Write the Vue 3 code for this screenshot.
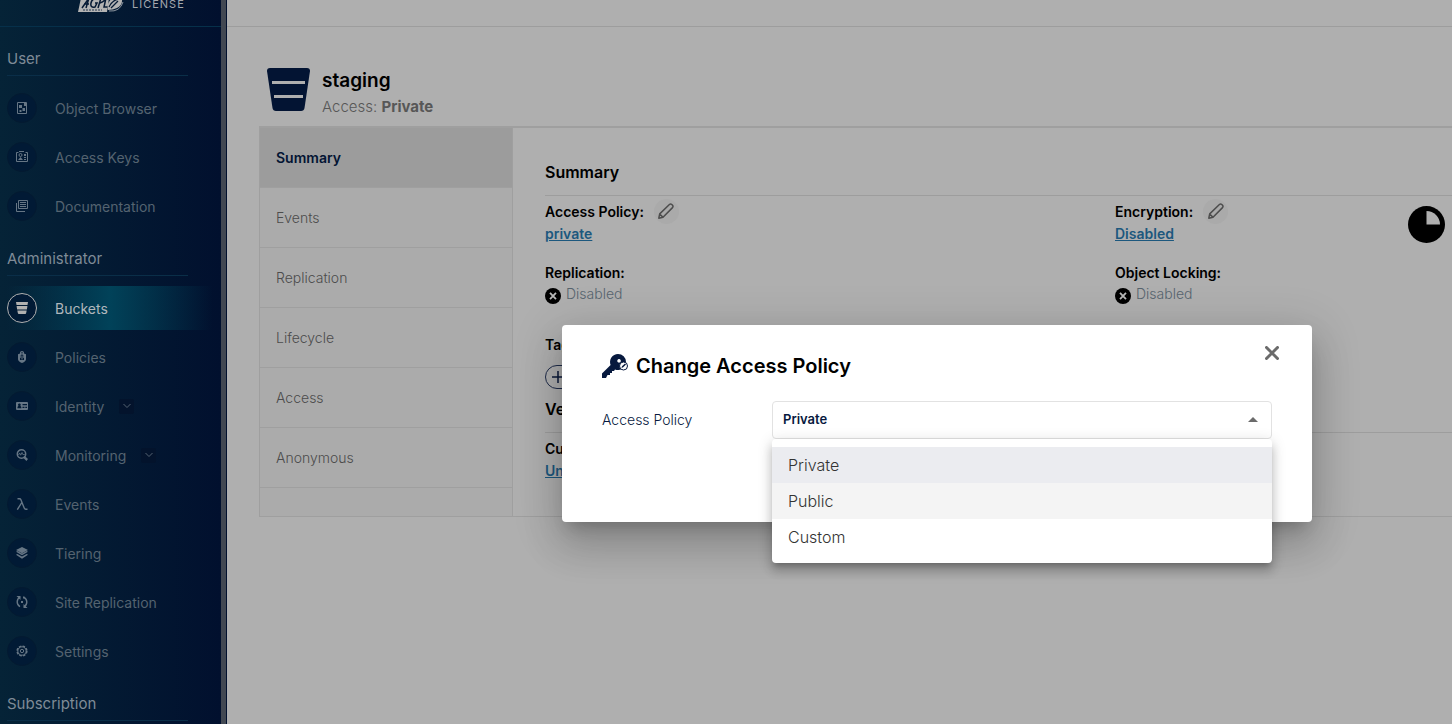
<script setup>
import { ref } from 'vue'

const groups = [
  {
    title: 'User',
    items: [
      { label: 'Object Browser', icon: 'browser' },
      { label: 'Access Keys', icon: 'keys' },
      { label: 'Documentation', icon: 'docs' }
    ]
  },
  {
    title: 'Administrator',
    items: [
      { label: 'Buckets', icon: 'bucket', active: true },
      { label: 'Policies', icon: 'policy' },
      { label: 'Identity', icon: 'identity', expandable: true },
      { label: 'Monitoring', icon: 'monitor', expandable: true },
      { label: 'Events', icon: 'lambda' },
      { label: 'Tiering', icon: 'layers' },
      { label: 'Site Replication', icon: 'sync' },
      { label: 'Settings', icon: 'gear' }
    ]
  },
  { title: 'Subscription', items: [] }
]

const icons = {
  browser: '<path fill="none" stroke="currentColor" d="M1.5 .5h9v11h-9z"/><path d="M3 3h3v3H3zM6.500 6h2.500v3H6.500zM3.500 8h2v2h-2zM8 1h2v3H8z"/>',
  keys: '<path fill="none" stroke="currentColor" d="M2.500 1.500h-2v9h11v-9h-2M3 .5h5"/><circle cx="4.500" cy="4" r="1.500" fill="none" stroke="currentColor"/><path d="M2 9l2.500-3L7 9zM8 3h2v2H8zM8 6h2v1H8zM8 8h2v1H8z"/>',
  docs: '<path fill="none" stroke="currentColor" d="M2.500 .5h9v8h-9zM.5 3v8.500H9M4 2.500h6M4 4.500h6M4 6.500h6"/>',
  bucket: '<path d="M0 0h12l-.5 3H.5zM.6 4h10.800l-.5 3.500H1.100zM1.300 8.500h9.400l-.6 2.700q-.1.800-.9.800H2.800q-.8 0-.9-.8z"/>',
  policy: '<path fill-rule="evenodd" d="M4 2.500V1.500Q4 0 6 0t2 1.500v1l2 .8v5Q10 10.500 6 12 2 10.500 2 8.300v-5zM5 2.200h2v-.7H5zM6 3.500a1.500 1.500 0 0 0-.8 2.700L4 7v2h4V7l-1.200-.8A1.500 1.500 0 0 0 6 3.500z"/><path d="M5.500 4.500h1v4h-1z"/>',
  identity: '<path fill-rule="evenodd" d="M1 2h10q1 0 1 1v6q0 1-1 1H1q-1 0-1-1V3q0-1 1-1zM3.300 3.500a1.300 1.300 0 0 0-.8 2.300L1.500 7v1.300h3.800V7l-1-1.200a1.300 1.300 0 0 0-1-2.300zM6.500 4v1.300H11V4zM6.500 6.700V8h2V6.700zM9.300 6.700V8H11V6.700z"/>',
  monitor: '<circle cx="5.500" cy="5" r="4.200" fill="none" stroke="currentColor" stroke-width="1.500"/><path d="M7 8.500l1.500-1.800L12 10l-1.600 2z"/><path fill="none" stroke="currentColor" stroke-width=".8" d="M2.500 6l1.200-2 1 2.200L6 3.500l.8 2h2"/>',
  lambda: '<path fill="none" stroke="currentColor" stroke-width="1.400" d="M1.500 .8h2q1 0 1.400 1L8.200 10q.5 1.200 1.600 1.200h1.700M5.800 4.500L1.300 11.700"/>',
  layers: '<path d="M6 0l6 3-6 3.300L0 3z"/><path d="M0 4.700l1.500-.8L6 6.600l4.500-2.700 1.500.8L6 8.300zM0 7.700l1.300-.8L6 9.500l4.700-2.600 1.300.8L6 11.700z"/>',
  sync: '<path fill="none" stroke="currentColor" stroke-width="1.400" d="M4 1.200Q1.200 2.800 1.200 6q0 3 2.800 4.700M8 10.800Q10.800 9.200 10.800 6q0-3-2.800-4.700"/><path d="M.5 0h4v4zM11.500 12h-4V8zM5 5h2v2H5zM7 .5h1.500v2H7z"/>',
  gear: '<circle cx="6" cy="6" r="4.800" fill="none" stroke="currentColor" stroke-width="1.600" stroke-dasharray="2.500 1.270"/><circle cx="6" cy="6" r="4.200" fill="none" stroke="currentColor"/><circle cx="6" cy="6" r="1.700" fill="none" stroke="currentColor"/>'
}

const tabs = ['Summary', 'Events', 'Replication', 'Lifecycle', 'Access', 'Anonymous']
const options = ['Private', 'Public', 'Custom']
const policy = ref('Private')
const hovered = ref('Public')
</script>

<template>
  <div class="app">
    <aside class="side">
      <header class="brand">
        <svg class="agpl" viewBox="0 0 46 14" width="46" height="14" aria-hidden="true">
          <path d="M3 0h28l-2 14H0z" fill="#b3b3b3" />
          <path d="M4 10L11 0M8 10l3-10M6 6h5M19 1q-5-1-6 4t4 4l2-4h-2M20 10l3-10h3q2 3-4 5M28 0l-2 9h4" fill="none" stroke="#071b35" stroke-width="1.500" />
          <path d="M5 12h19" stroke="#26394e" stroke-dasharray="2 1" />
          <path d="M30 12Q28 4 35 0h9q1 7-5 10-4 2-9 2z" fill="#b3b3b3" />
          <path d="M31 9Q35 1 42 1M33 10l7-7" fill="none" stroke="#071b35" stroke-width="1.300" />
          <path d="M31 13q11 1 14-9" fill="none" stroke="#8c959f" />
        </svg>
        <span class="license">LICENSE</span>
      </header>
      <nav class="nav" aria-label="Main">
        <section v-for="g in groups" :key="g.title">
          <h2 class="group">{{ g.title }}</h2>
          <ul v-if="g.items.length" class="items">
            <li v-for="i in g.items" :key="i.label">
              <a href="#" class="item" :class="{ active: i.active }">
                <span class="disc"><svg viewBox="0 0 12 12" width="12" height="12" fill="currentColor" aria-hidden="true" v-html="icons[i.icon]"></svg></span>
                <span>{{ i.label }}</span>
                <span v-if="i.expandable" class="chev">
                  <svg viewBox="0 0 8 6" width="8" height="6" aria-hidden="true"><path d="M.5 1L4 4.500 7.500 1" fill="none" stroke="currentColor" /></svg>
                </span>
              </a>
            </li>
          </ul>
        </section>
      </nav>
    </aside>
    <div class="bar"></div>

    <main class="main">
      <div class="topbar"></div>
      <div class="content">
        <header class="head">
          <svg viewBox="0 0 43 43" width="43" height="43" aria-hidden="true">
            <path d="M3 0h37q3 0 3 3l-5.500 37q-.5 3-3.500 3H9q-3 0-3.500-3L0 3q0-3 3-3z" fill="#031433" />
            <path d="M5 13h33v3H5zM7 27h29v3H7z" fill="#afafaf" />
          </svg>
          <div>
            <h1 class="name">staging</h1>
            <p class="access">Access: <b>Private</b></p>
          </div>
        </header>

        <div class="panel">
          <div class="tabs" role="tablist" aria-orientation="vertical">
            <button v-for="(t, n) in tabs" :key="t" class="tab" :class="{ on: n === 0 }" role="tab" :aria-selected="n === 0">{{ t }}</button>
          </div>
          <div class="body" role="tabpanel">
            <h2 class="sect">Summary</h2>
            <div class="grid">
              <div>
                <div class="label">Access Policy:
                  <button class="edit" aria-label="Edit access policy"><svg viewBox="0 0 16 16" width="16" height="16" aria-hidden="true"><path d="M.8 15.200l.9-4.300L11.400 1.500q1.200-1 2.400 0l.7.700q1 1.200 0 2.400L5 14.200zM1.900 11.200l2.900 2.900" fill="none" stroke="#4d4d4d" stroke-width="1.500" stroke-linejoin="round" /></svg></button>
                </div>
                <a href="#" class="link">private</a>
              </div>
              <div>
                <div class="label">Encryption:
                  <button class="edit" aria-label="Edit encryption"><svg viewBox="0 0 16 16" width="16" height="16" aria-hidden="true"><path d="M.8 15.200l.9-4.300L11.400 1.500q1.200-1 2.400 0l.7.700q1 1.200 0 2.400L5 14.200zM1.900 11.200l2.900 2.900" fill="none" stroke="#4d4d4d" stroke-width="1.500" stroke-linejoin="round" /></svg></button>
                </div>
                <a href="#" class="link">Disabled</a>
              </div>
              <svg class="pie" viewBox="0 0 37 37" width="37" height="37" aria-hidden="true">
                <circle cx="18.500" cy="18.500" r="18.500" />
                <path d="M18.500 5v13.500H32A13.500 13.500 0 0 0 18.500 5z" fill="#afafaf" />
              </svg>
              <div v-for="l in ['Replication:', 'Object Locking:']" :key="l">
                <div class="label">{{ l }}</div>
                <div class="off">
                  <svg viewBox="0 0 16 16" width="16" height="16" aria-hidden="true"><circle cx="8" cy="8" r="8" /><path d="M5 4.800l6 6.400M11 4.800l-6 6.400" stroke="#b8b8b8" stroke-width="1.800" /></svg>
                  <span>Disabled</span>
                </div>
              </div>
            </div>
            <div class="tags">
              <div class="label">Tags:</div>
              <button class="add" aria-label="Add tag"><svg viewBox="0 0 12 12" width="12" height="12" aria-hidden="true"><path d="M6 0v12M0 6h12" stroke="#0b1a3a" stroke-width="1.500" /></svg></button>
            </div>
            <h2 class="sect second">Versioning</h2>
            <div class="state">
              <div class="label">Current Status:</div>
              <a href="#" class="link">Unversioned</a>
            </div>
          </div>
        </div>
      </div>
    </main>

    <div class="modal" role="dialog" aria-modal="true" aria-labelledby="dlg">
      <header class="mhead">
        <svg viewBox="0 0 26 24" width="26" height="24" aria-hidden="true">
          <path fill-rule="evenodd" fill="#07193e" d="M16 0a8 8 0 0 1 8 8 8 8 0 0 1-11 7.400L12 17h-2v2H8v2H5.500L4 24H0v-4.500L8.600 11A8 8 0 0 1 16 0zM17 5a1.800 1.800 0 1 0 .1 0z" />
          <circle cx="21.500" cy="12" r="4" fill="#fff" stroke="#07193e" />
          <path d="M19.500 14l.5-1.800 3-2.700 1 1-2.800 2.800z" fill="#07193e" />
        </svg>
        <h2 id="dlg">Change Access Policy</h2>
        <button class="close" aria-label="Close"><svg viewBox="0 0 14 14" width="14" height="14" aria-hidden="true"><path d="M1.500 1.500l11 11M12.500 1.500l-11 11" stroke="#6b6b6b" stroke-width="3" stroke-linecap="round" /></svg></button>
      </header>
      <div class="field">
        <label for="policy">Access Policy</label>
        <div class="pick">
          <select id="policy" v-model="policy">
            <option v-for="o in options" :key="o">{{ o }}</option>
          </select>
          <svg class="caret" viewBox="0 0 10 5" width="10" height="5" aria-hidden="true"><path d="M0 5l5-5 5 5z" fill="#6b6b6b" /></svg>
          <ul class="menu" role="listbox" aria-label="Access Policy">
            <li v-for="o in options" :key="o" class="opt" role="option" :class="{ sel: o === policy, hov: o === hovered }" :aria-selected="o === policy" @mouseenter="hovered = o" @click="policy = o">{{ o }}</li>
          </ul>
        </div>
      </div>
    </div>
  </div>
</template>

<style>
body { margin: 0; }
</style>

<style scoped>
* { box-sizing: border-box; }
.app {
  position: relative;
  display: flex;
  height: 100vh;
  overflow: hidden;
  background: #afafaf;
  color: #000;
  font-family: Inter, "Liberation Sans", sans-serif;
  font-size: 14px;
}
h1, h2, p, ul { margin: 0; padding: 0; }
ul { list-style: none; }
button { padding: 0; border: 0; background: none; font: inherit; color: inherit; }
svg { display: block; flex: none; }

.side {
  flex: none;
  width: 221px;
  overflow: hidden;
  background: linear-gradient(90deg, #052337, #01102e);
}
.brand {
  display: flex;
  height: 27px;
  padding-left: 78px;
  gap: 8px;
  border-bottom: 1px solid #06304a;
}
.agpl { margin-top: -2px; }
.license { color: #a2a7ad; font-size: 11px; line-height: 8px; letter-spacing: 1px; }
.nav { padding: 1px 0 0 7px; }
.group {
  width: 181px;
  height: 48px;
  padding-top: 21px;
  border-bottom: 1px solid #0a2e48;
  color: #7f8b97;
  font-size: 15px;
  font-weight: 400;
  line-height: 20px;
}
.items { display: flex; flex-direction: column; gap: 5px; padding-top: 10px; }
.item {
  display: flex;
  align-items: center;
  height: 44px;
  color: #546370;
  font-size: 14px;
  text-decoration: none;
}
.item.active {
  color: #b0b7bc;
  background: linear-gradient(90deg, transparent, #014259 48%, transparent 96%);
}
.disc {
  display: grid;
  place-items: center;
  width: 30px;
  height: 30px;
  margin-right: 18px;
  border: 1px solid #041a31;
  border-radius: 50%;
  background: #011a35;
  color: #667685;
}
.active .disc { border-color: #b0b0b0; color: #b0b0b0; }
.chev {
  display: grid;
  place-items: center;
  width: 15px;
  height: 15px;
  margin-left: 15px;
  border-radius: 2px;
  background: #03132c;
}
.bar { flex: none; width: 6px; background: #424852; border-right: 1px solid #01102e; }

.main { flex: 1; min-width: 0; }
.topbar { height: 27px; border-bottom: 1px solid #9d9d9d; }
.content { padding: 40px 0 0 32px; }
.head { display: flex; gap: 12px; height: 59px; padding: 1px 0 0 8px; }
.name { font-size: 19px; font-weight: 600; line-height: 26px; }
.access { color: #575757; font-size: 15px; font-weight: 300; line-height: 26px; }
.access b { font-weight: 700; }
.panel {
  display: flex;
  min-height: 391px;
  border: 1px solid #9f9f9f;
  border-top-width: 2px;
  border-right: 0;
}
.tabs { flex: none; width: 253px; border-right: 1px solid #9f9f9f; background: #ababab; }
.tab {
  display: block;
  width: 100%;
  height: 60px;
  padding-left: 16px;
  border-bottom: 1px solid #9f9f9f;
  color: #4c4c4c;
  font-weight: 300;
  text-align: left;
}
.tab.on { background: #9c9c9c; color: #031433; font-weight: 600; }
.body { flex: 1; min-width: 0; padding: 32px 0 0 32px; }
.sect {
  height: 36px;
  border-bottom: 1px solid #9d9d9d;
  font-size: 16px;
  font-weight: 600;
  line-height: 24px;
}
.grid {
  display: grid;
  grid-template-columns: 1fr 293px 44px;
  row-gap: 15px;
  padding-top: 3px;
}
.label { display: flex; align-items: center; gap: 10px; height: 24px; font-weight: 600; }
.edit {
  display: grid;
  place-items: center;
  width: 25px;
  height: 25px;
  border-radius: 50%;
  background: #aaa;
}
.link { display: block; color: #1c587e; font-weight: 600; line-height: 22px; }
.pie { margin-top: 7px; }
.off { display: flex; gap: 5px; color: #56646e; font-weight: 300; line-height: 20px; }
.off svg { margin-top: 4px; }
.tags { padding-top: 28px; }
.add {
  display: flex;
  align-items: center;
  width: 80px;
  height: 24px;
  margin-top: 9px;
  padding-left: 6px;
  border: 1px solid #1f2c4a;
  border-radius: 12px;
}
.second { margin-top: 8px; }
.state { padding-top: 3px; }

.modal {
  position: absolute;
  top: 325px;
  left: 562px;
  width: 750px;
  height: 197px;
  padding: 28px 40px;
  border-radius: 4px;
  background: #fff;
  box-shadow: 0 11px 15px -7px rgba(0, 0, 0, .2), 0 24px 38px 3px rgba(0, 0, 0, .14), 0 9px 46px 8px rgba(0, 0, 0, .12);
}
.mhead { display: flex; align-items: center; gap: 8px; height: 26px; }
.mhead h2 { flex: 1; font-size: 20px; font-weight: 600; line-height: 26px; }
.close { display: grid; place-items: center; width: 30px; height: 30px; margin: -26px -15px 0 0; }
.field { display: flex; align-items: center; margin-top: 22px; color: #07193e; }
.field label { width: 170px; padding-bottom: 2px; font-weight: 300; }
.pick { position: relative; flex: 1; }
select {
  display: block;
  width: 100%;
  height: 38px;
  padding: 0 10px 2px;
  appearance: none;
  border: 1px solid #e2e2e2;
  border-radius: 4px;
  background: #fff;
  color: #07193e;
  font: 600 13px Inter, sans-serif;
}
.caret { position: absolute; right: 14px; top: 16px; }
.menu {
  position: absolute;
  top: 38px;
  left: 0;
  right: 0;
  padding: 8px 0;
  border-radius: 4px;
  background: #fff;
  box-shadow: 0 5px 5px -3px rgba(0, 0, 0, .2), 0 8px 10px 1px rgba(0, 0, 0, .14), 0 3px 14px 2px rgba(0, 0, 0, .12);
}
.opt { padding-left: 16px; color: #333; font-size: 16px; font-weight: 300; line-height: 36px; }
.opt.hov { background: #f4f4f4; }
.opt.sel { background: #ebecf0; }
</style>
